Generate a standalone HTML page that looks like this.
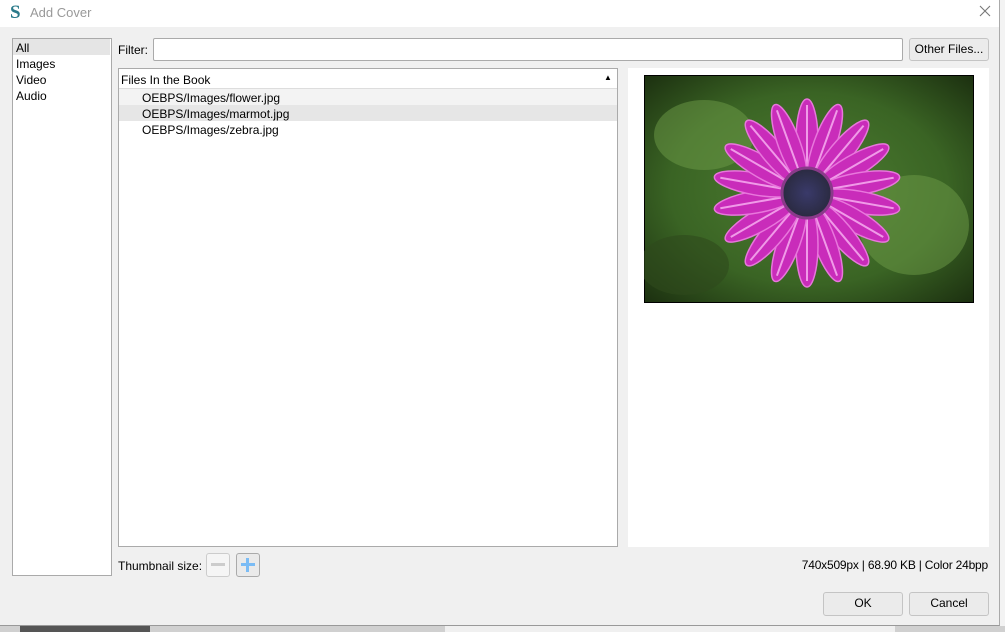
<!DOCTYPE html>
<html><head><meta charset="utf-8"><style>
*{box-sizing:border-box;margin:0;padding:0}
body{width:1005px;height:632px;overflow:hidden;background:#d8d8d8;font-family:"Liberation Sans","DejaVu Sans",sans-serif;font-size:12px;color:#000;position:relative}
.abs{position:absolute}
.dlg{left:0;top:0;width:1000px;height:626px;background:#f0f0f0;border-right:1px solid #aaa;border-bottom:1px solid #999}
.title{left:0;top:0;width:999px;height:27px;background:#fff}
.btn{background:#ebebeb;border:1px solid #c4c4c4;border-radius:3px;text-align:center;line-height:21px}
</style></head><body>
<div class="abs" style="left:1000px;top:0;width:5px;height:632px;background:#f3f3f3"></div>
<div class="abs" style="left:0;top:626px;width:1005px;height:6px;background:#d0d0d0"></div>
<div class="abs" style="left:20px;top:626px;width:130px;height:6px;background:#555"></div>
<div class="abs" style="left:445px;top:626px;width:450px;height:6px;background:#f0f0f0"></div>
<div class="abs dlg"></div>
<div class="abs title"></div>
<div class="abs" style="left:10px;top:2px;font-family:'Liberation Serif',serif;font-size:19px;color:#2a7a8a;font-weight:bold">S</div>
<div class="abs" style="left:30px;top:5px;font-size:13px;color:#999">Add Cover</div>
<svg class="abs" style="left:979px;top:5px" width="12" height="12"><path d="M1 1L11 11M11 1L1 11" stroke="#777" stroke-width="1.1"/></svg>

<div class="abs" style="left:12px;top:38px;width:100px;height:538px;background:#fff;border:1px solid #aaa"></div>
<div class="abs" style="left:13px;top:39px;width:97px;height:16px;background:#e5e5e5"></div>
<div class="abs" style="left:16px;top:40px;line-height:16px">All<br>Images<br>Video<br>Audio</div>

<div class="abs" style="left:118px;top:43px">Filter:</div>
<div class="abs" style="left:153px;top:38px;width:750px;height:23px;background:#fff;border:1px solid #aaa;border-radius:2px"></div>
<div class="abs btn" style="left:909px;top:38px;width:80px;height:23px">Other Files...</div>

<div class="abs" style="left:118px;top:68px;width:500px;height:479px;background:#fff;border:1px solid #aaa"></div>
<div class="abs" style="left:119px;top:69px;width:498px;height:20px;background:#fff;border-bottom:1px solid #ddd"></div>
<div class="abs" style="left:121px;top:73px">Files In the Book</div>
<div class="abs" style="left:604px;top:73px;font-size:8px">▲</div>
<div class="abs" style="left:119px;top:89px;width:498px;height:16px;background:#f3f3f3"></div>
<div class="abs" style="left:119px;top:105px;width:498px;height:16px;background:#e6e6e6"></div>
<div class="abs" style="left:142px;top:90px;line-height:16px">OEBPS/Images/flower.jpg<br>OEBPS/Images/marmot.jpg<br>OEBPS/Images/zebra.jpg</div>

<div class="abs" style="left:628px;top:68px;width:361px;height:479px;background:#fff"></div>
<svg class="abs" style="left:644px;top:75px" width="330" height="228" viewBox="0 0 330 228">
<defs><radialGradient id="g" cx="0.5" cy="0.5" r="0.7"><stop offset="0" stop-color="#4e7e32"/><stop offset="0.6" stop-color="#3a6424"/><stop offset="1" stop-color="#1c3010"/></radialGradient>
<radialGradient id="c" cx="0.5" cy="0.5" r="0.5"><stop offset="0" stop-color="#3a3a6a"/><stop offset="1" stop-color="#2a2a40"/></radialGradient></defs>
<rect width="330" height="228" fill="url(#g)" stroke="#000" stroke-width="2"/>
<ellipse cx="60" cy="60" rx="50" ry="35" fill="#6e9c48" opacity=".5"/>
<ellipse cx="270" cy="150" rx="55" ry="50" fill="#6e9c48" opacity=".5"/>
<ellipse cx="40" cy="190" rx="45" ry="30" fill="#2e4a1c" opacity=".6"/>
<g transform="translate(163,118)" fill="#c92cba" stroke="#e877dc" stroke-width="1.5">
<g id="p"><ellipse cx="0" cy="-52" rx="11" ry="42"/><path d="M0 -20V-88" stroke="#f09ae8" stroke-width="2"/></g>
<use href="#p" transform="rotate(20)"/><use href="#p" transform="rotate(40)"/><use href="#p" transform="rotate(60)"/><use href="#p" transform="rotate(80)"/><use href="#p" transform="rotate(100)"/><use href="#p" transform="rotate(120)"/><use href="#p" transform="rotate(140)"/><use href="#p" transform="rotate(160)"/><use href="#p" transform="rotate(180)"/><use href="#p" transform="rotate(200)"/><use href="#p" transform="rotate(220)"/><use href="#p" transform="rotate(240)"/><use href="#p" transform="rotate(260)"/><use href="#p" transform="rotate(280)"/><use href="#p" transform="rotate(300)"/><use href="#p" transform="rotate(320)"/><use href="#p" transform="rotate(340)"/>
<circle r="25" fill="url(#c)" stroke="#8a3a8a" stroke-width="3"/>
</g></svg>

<div class="abs" style="left:118px;top:559px">Thumbnail size:</div>
<div class="abs" style="left:206px;top:553px;width:24px;height:24px;border:1px solid #ccc;border-radius:3px;background:#f5f5f5"></div>
<div class="abs" style="left:211px;top:563px;width:14px;height:3px;background:#ccc"></div>
<div class="abs" style="left:236px;top:553px;width:24px;height:24px;border:1px solid #aaa;border-radius:3px;background:#eaeaea"></div>
<div class="abs" style="left:241px;top:563px;width:14px;height:3px;background:#7bbcf5"></div>
<div class="abs" style="left:246px;top:558px;width:3px;height:14px;background:#7bbcf5"></div>

<div class="abs" style="right:17px;top:558px;letter-spacing:-0.2px">740x509px | 68.90 KB | Color 24bpp</div>
<div class="abs btn" style="left:823px;top:592px;width:80px;height:24px">OK</div>
<div class="abs btn" style="left:909px;top:592px;width:80px;height:24px">Cancel</div>
</body></html>
